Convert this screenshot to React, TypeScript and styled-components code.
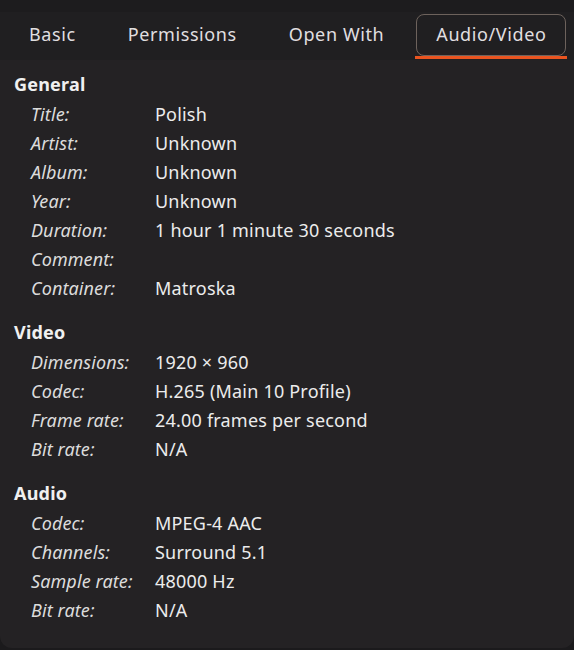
import React from 'react';
import styled, { createGlobalStyle } from 'styled-components';

interface Row {
    label : string
    value : string
}

interface Section {
    title : string
    rows : Row[]
}

const tabs = ['Basic', 'Permissions', 'Open With', 'Audio/Video'];

const sections : Section[] = [
    {
        title: 'General',
        rows: [
            {label: 'Title:', value: 'Polish'},
            {label: 'Artist:', value: 'Unknown'},
            {label: 'Album:', value: 'Unknown'},
            {label: 'Year:', value: 'Unknown'},
            {label: 'Duration:', value: '1 hour 1 minute 30 seconds'},
            {label: 'Comment:', value: ''},
            {label: 'Container:', value: 'Matroska'},
        ],
    },
    {
        title: 'Video',
        rows: [
            {label: 'Dimensions:', value: '1920 × 960'},
            {label: 'Codec:', value: 'H.265 (Main 10 Profile)'},
            {label: 'Frame rate:', value: '24.00 frames per second'},
            {label: 'Bit rate:', value: 'N/A'},
        ],
    },
    {
        title: 'Audio',
        rows: [
            {label: 'Codec:', value: 'MPEG-4 AAC'},
            {label: 'Channels:', value: 'Surround 5.1'},
            {label: 'Sample rate:', value: '48000 Hz'},
            {label: 'Bit rate:', value: 'N/A'},
        ],
    },
];

function App () {
    return(
        <>
            <GlobalStyle/>
            <Window>
                <TopStrip/>
                <TabBar>
                    {tabs.map(tab => (
                        <Tab key={tab} active={tab === 'Audio/Video'}>{tab}</Tab>
                    ))}
                </TabBar>
                <Content>
                    {sections.map(section => (
                        <Group key={section.title}>
                            <Heading>{section.title}</Heading>
                            <Grid>
                                {section.rows.map(row => (
                                    <React.Fragment key={section.title + row.label}>
                                        <Label>{row.label}</Label>
                                        <Value>{row.value}</Value>
                                    </React.Fragment>
                                ))}
                            </Grid>
                        </Group>
                    ))}
                </Content>
            </Window>
        </>
    )
};

const GlobalStyle = createGlobalStyle`
  html, body {
    margin: 0;
    padding: 0;
    background: #1b1a1c;
  }
  body {
    font-family: "Noto Sans", "DejaVu Sans", sans-serif;
    letter-spacing: 0.2px;
  }
`;
const Window = styled.div`
  width: 574px;
  height: 648px;
  background: #242224;
  border-radius: 0 0 12px 12px;
  display: flex;
  flex-direction: column;
  overflow: hidden;
`;
const TopStrip = styled.div`
  height: 12px;
  background: #1d1c1e;
`;
const TabBar = styled.div`
  display: flex;
  align-items: flex-start;
  height: 48px;
  padding: 2px 0 0 9px;
  gap: 12px;
  background: #201f21;
  box-sizing: border-box;
`;
const Tab = styled.div<{active? : boolean}>`
  position: relative;
  display: flex;
  align-items: center;
  justify-content: center;
  box-sizing: border-box;
  height: 42px;
  padding: 0 19px 2px;
  font-size: 18px;
  letter-spacing: 0.6px;
  color: #e0dfe0;
  border: 1px solid ${p => p.active ? '#6d625c' : 'transparent'};
  border-radius: 8px;
  &::after {
    content: '';
    display: ${p => p.active ? 'block' : 'none'};
    position: absolute;
    left: -2px;
    right: -2px;
    bottom: -4px;
    height: 3px;
    background: #e95420;
  }
`;
const Content = styled.div`
  display: flex;
  flex-direction: column;
  gap: 16px;
  padding: 10px 0 0 14px;
`;
const Group = styled.div`
  display: flex;
  flex-direction: column;
`;
const Heading = styled.div`
  font-size: 18px;
  font-weight: 700;
  color: #f0f0f0;
  line-height: 29px;
`;
const Grid = styled.div`
  display: grid;
  grid-template-columns: 124px 1fr;
  grid-auto-rows: 29px;
  padding-left: 17px;
  align-items: center;
`;
const Label = styled.span`
  font-style: italic;
  font-size: 18px;
  letter-spacing: 0.1px;
  color: #dcdcdc;
`;
const Value = styled.span`
  font-size: 18px;
  color: #ececec;
`;

export default App;
